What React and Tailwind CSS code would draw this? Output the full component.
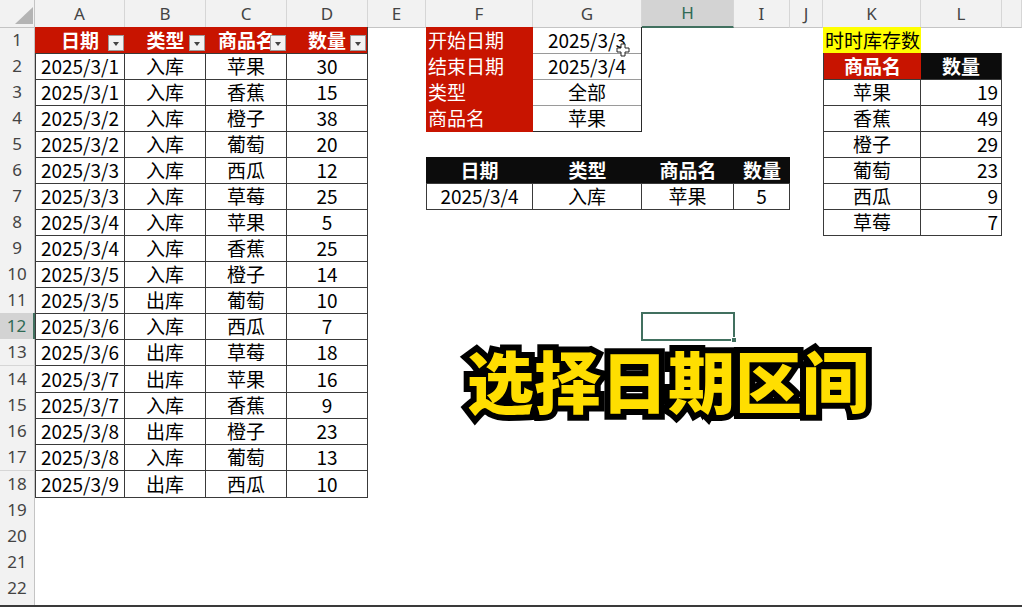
import React from "react";

const data = [
  ["2025/3/1", "入库", "苹果", "30"],
  ["2025/3/1", "入库", "香蕉", "15"],
  ["2025/3/2", "入库", "橙子", "38"],
  ["2025/3/2", "入库", "葡萄", "20"],
  ["2025/3/3", "入库", "西瓜", "12"],
  ["2025/3/3", "入库", "草莓", "25"],
  ["2025/3/4", "入库", "苹果", "5"],
  ["2025/3/4", "入库", "香蕉", "25"],
  ["2025/3/5", "入库", "橙子", "14"],
  ["2025/3/5", "出库", "葡萄", "10"],
  ["2025/3/6", "入库", "西瓜", "7"],
  ["2025/3/6", "出库", "草莓", "18"],
  ["2025/3/7", "出库", "苹果", "16"],
  ["2025/3/7", "入库", "香蕉", "9"],
  ["2025/3/8", "出库", "橙子", "23"],
  ["2025/3/8", "入库", "葡萄", "13"],
  ["2025/3/9", "出库", "西瓜", "10"],
];

const inv = [
  ["苹果", "19"],
  ["香蕉", "49"],
  ["橙子", "29"],
  ["葡萄", "23"],
  ["西瓜", "9"],
  ["草莓", "7"],
];

const hdrA = ["日期", "类型", "商品名", "数量"];
const letters = ["A", "B", "C", "D", "E", "F", "G", "H", "I", "J", "K", "L", ""];
const filterLabels = ["开始日期", "结束日期", "类型", "商品名"];
const filterVals = ["2025/3/3", "2025/3/4", "全部", "苹果"];
const resHdr = ["日期", "类型", "商品名", "数量"];
const resRow = ["2025/3/4", "入库", "苹果", "5"];

const GRID =
  "grid grid-cols-[35px_90px_81px_81px_81px_58px_107px_109px_92px_56px_33px_98px_81px_1fr]";

const base = "flex items-center overflow-hidden whitespace-nowrap text-[19px] text-black";
const bd = "border-r border-b border-[#3a3a3a]";

const Drop = () => (
  <span className="absolute right-[1px] bottom-[2px] w-[16px] h-[16px] bg-[#f3f3f3] border border-[#9c9c9c] flex items-center justify-center">
    <span className="mt-[3px] w-0 h-0 border-l-[3px] border-r-[3px] border-t-[4px] border-l-transparent border-r-transparent border-t-[#444]"></span>
  </span>
);

function Cell({ r, c }) {
  if (r === 1 && c >= 1 && c <= 4) {
    return (
      <div
        className={`${base} relative justify-center bg-[#c81400] text-white font-bold border-b border-[#3a3a3a] ${
          c === 4 ? "border-r" : ""
        }`}
      >
        <span className="text-white">{hdrA[c - 1]}</span>
        <Drop />
      </div>
    );
  }
  if (r >= 2 && r <= 18 && c >= 1 && c <= 4) {
    return (
      <div className={`${base} justify-center ${bd} ${c === 1 ? "border-l" : ""}`}>
        {data[r - 2][c - 1]}
      </div>
    );
  }
  if (r >= 1 && r <= 4 && c === 6) {
    return (
      <div className={`${base} justify-start pl-[2px] bg-[#c81400]`}>
        <span className="text-white">{filterLabels[r - 1]}</span>
      </div>
    );
  }
  if (r >= 1 && r <= 4 && c === 7) {
    return (
      <div
        className={`${base} justify-center border-r border-r-[#2a2a2a] border-b ${
          r === 4 ? "border-b-[#2a2a2a]" : "border-b-[#9a9a9a]"
        }`}
      >
        {filterVals[r - 1]}
      </div>
    );
  }
  if (r === 6 && c >= 6 && c <= 9) {
    return (
      <div className={`${base} justify-center bg-[#0c0c0c] font-bold border-b border-[#3a3a3a]`}>
        <span className="text-white">{resHdr[c - 6]}</span>
      </div>
    );
  }
  if (r === 7 && c >= 6 && c <= 9) {
    return (
      <div className={`${base} justify-center ${bd} ${c === 6 ? "border-l" : ""}`}>
        {resRow[c - 6]}
      </div>
    );
  }
  if (r === 1 && c === 11) {
    return <div className={`${base} justify-start pl-[2px] bg-[#ffff00]`}>时时库存数</div>;
  }
  if (r === 2 && c === 11) {
    return (
      <div className={`${base} justify-center bg-[#c81400] font-bold border-b border-l border-[#3a3a3a]`}>
        <span className="text-white">商品名</span>
      </div>
    );
  }
  if (r === 2 && c === 12) {
    return (
      <div className={`${base} justify-center bg-[#0c0c0c] font-bold border-b border-r border-[#3a3a3a]`}>
        <span className="text-white">数量</span>
      </div>
    );
  }
  if (r >= 3 && r <= 8 && c === 11) {
    return <div className={`${base} justify-center ${bd} border-l`}>{inv[r - 3][0]}</div>;
  }
  if (r >= 3 && r <= 8 && c === 12) {
    return <div className={`${base} justify-end pr-[3px] ${bd}`}>{inv[r - 3][1]}</div>;
  }
  if (r === 12 && c === 8) {
    return (
      <div className="relative">
        <div className="absolute -left-[1px] -top-[1px] -right-[1px] -bottom-[1px] border-2 border-[#41705f]"></div>
        <div className="absolute -right-[3px] -bottom-[3px] w-[6px] h-[6px] bg-[#41705f] border border-white"></div>
      </div>
    );
  }
  return <div></div>;
}

function RowHeader({ r }) {
  const sel = r === 12;
  return (
    <div
      className={`flex items-center justify-center text-[17px] font-['Noto_Sans',sans-serif] border-b border-b-[#d6d6d6] ${
        sel
          ? "bg-[#d3d3d3] text-[#2f6a55] border-r-2 border-r-[#41705f]"
          : "bg-[#f2f2f2] text-[#444] border-r border-r-[#c4c4c4]"
      }`}
    >
      {r}
    </div>
  );
}

export default function App() {
  const rows = Array.from({ length: 22 }, (_, i) => i + 1);
  return (
    <div className="w-[1022px] h-[608px] overflow-hidden bg-white relative font-['Noto_Sans_CJK_SC','Noto_Sans',sans-serif]">
      <div className="h-[605px] overflow-hidden flex flex-col">
        <div className={`${GRID} h-[27px] shrink-0`}>
          <div className="relative bg-[#f2f2f2] border-r border-b border-[#c4c4c4]">
            <svg className="absolute left-[15px] top-[7px]" width="18" height="17" viewBox="0 0 18 17">
              <polygon points="18,0 18,17 0,17" fill="#b4b4b4" />
            </svg>
          </div>
          {letters.map((l, i) => {
            const sel = l === "H";
            return (
              <div
                key={i}
                className={`flex items-center justify-center text-[17px] font-['Noto_Sans',sans-serif] border-r border-r-[#d6d6d6] ${
                  sel
                    ? "bg-[#d3d3d3] text-[#2f6a55] border-b-2 border-b-[#41705f]"
                    : "bg-[#f2f2f2] text-[#444] border-b border-b-[#c4c4c4]"
                }`}
              >
                {l}
              </div>
            );
          })}
        </div>
        {rows.map((r) => (
          <div
            key={r}
            className={`${GRID} shrink-0 ${r === 13 || r === 17 ? "h-[27px]" : "h-[26px]"}`}
          >
            <RowHeader r={r} />
            {Array.from({ length: 13 }, (_, k) => (
              <Cell key={k} r={r} c={k + 1} />
            ))}
          </div>
        ))}
        <div className={`${GRID} flex-1`}>
          <div className="bg-[#f2f2f2] border-r border-r-[#c4c4c4]"></div>
        </div>
      </div>
      <div className="h-[2px] bg-[#3a3a3a]"></div>

      <svg className="absolute left-[616px] top-[43px]" width="14" height="14" viewBox="0 0 14 14">
        <path d="M5 1h4v4h4v4h-4v4h-4v-4h-4v-4h4z" fill="#fff" stroke="#222" strokeWidth="1" />
      </svg>

      <div className="absolute left-[467px] top-[345px] text-[67px] leading-none font-black whitespace-nowrap">
        <span className="absolute left-0 top-0 text-black [-webkit-text-stroke:12px_#000]">选择日期区间</span>
        <span className="relative text-[#ffde00]">选择日期区间</span>
      </div>
    </div>
  );
}
